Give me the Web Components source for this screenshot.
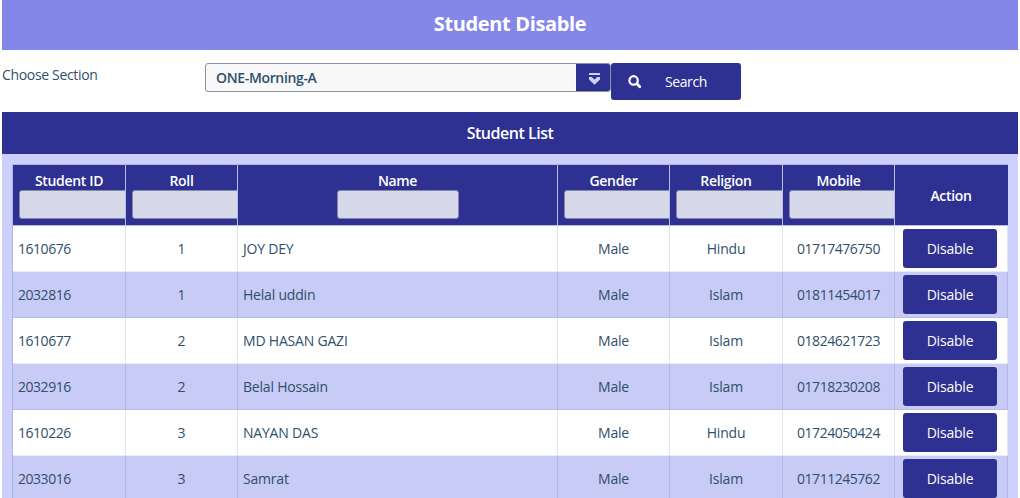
<!DOCTYPE html>
<html lang="en">
<head>
<meta charset="utf-8">
<title>Student Disable</title>
<style>
body{margin:0;height:498px;overflow:hidden;background:#fff;font:14px/20px "Open Sans",sans-serif;color:#2f4f6b;--navy:#2e3192}
</style>
</head>
<body>
<student-page></student-page>
<script>
const define = (name, html, setup) => customElements.define(name, class extends HTMLElement {
  constructor() {
    super();
    this.attachShadow({mode: 'open'});
  }
  connectedCallback() {
    if (this.shadowRoot.childNodes.length) return;
    const t = document.createElement('template');
    t.innerHTML = html;
    this.shadowRoot.append(t.content.cloneNode(true));
    if (setup) setup.call(this, this.shadowRoot);
  }
});

define('page-title', `<style>
:host{display:block;height:50px;box-sizing:border-box;padding-top:9px;background:#8587e8;color:#fff;font-size:20px;line-height:30px;font-weight:700;text-align:center;letter-spacing:-.37px}
</style><slot></slot>`);

define('section-select', `<style>
:host{display:flex;box-sizing:border-box;width:406px;height:29px;border:1px solid #8a929b;border-radius:3px;background:#f8f8f8;overflow:hidden;font-weight:600;line-height:27px}
.value{flex:1;padding-left:10px;letter-spacing:-.35px}
.arrow{width:34px;background:var(--navy);display:flex;justify-content:center}
svg{margin-top:9px;margin-left:3px;width:13px;height:13px}
</style><div class="value"><slot></slot></div><div class="arrow"><svg viewBox="0 0 13 13"><path d="M1.8 0h9.4a.9.9 0 0 1 .9.9v1.2H.9V.9a.9.9 0 0 1 .9-.9z" fill="#cdd3fb"/><path d="M1 4h2.6l2.9 2.6L9.4 4H12v2.6l-5.5 5.2L1 6.6z" fill="#cdd3fb"/></svg></div>`);

define('action-button', `<style>
:host{display:flex;align-items:center;justify-content:center;box-sizing:border-box;border-radius:3px;background:var(--navy);color:#fff}
</style><slot name="icon"></slot><span><slot></slot></span>`);

define('section-form', `<style>
:host{display:flex;height:62px;box-sizing:border-box;padding-top:13px}
label{width:203px;padding-top:2px;letter-spacing:-.33px}
action-button{width:130px;height:37px;letter-spacing:-.4px;justify-content:flex-start;padding-left:17px}
svg{width:14px;height:14px;margin-right:23px}
</style><label>Choose Section</label><section-select>ONE-Morning-A</section-select>
<action-button><svg slot="icon" viewBox="0 0 14 14" fill="none" stroke="#fff"><circle cx="5.6" cy="5.4" r="4.2" stroke-width="2.2"/><path d="m8.9 8.8 2.9 2.9" stroke-width="2.8" stroke-linecap="round"/></svg>Search</action-button>`);

define('head-cell', `<style>
:host{display:block;box-sizing:border-box;height:60px;border-right:1px solid #b9bee9;background:var(--navy);color:#fff;font-weight:600;letter-spacing:-.33px;text-align:center;overflow:hidden;padding-top:6px}
:host([plain]){padding-top:21px;border-right-color:var(--navy)}
:host([plain]) .filter{display:none}
.filter{box-sizing:border-box;width:122px;height:29px;margin:-1px 0 0 6px;border:1px solid #8588a6;border-radius:3px;background:#d6d7e8}
:host([wide]) .filter{margin-left:99px}
</style><div><slot></slot></div><div class="filter"></div>`);

define('data-cell', `<style>
:host{display:block;box-sizing:border-box;height:46px;padding:13px 5px 0;text-align:center;letter-spacing:-.2px;border-right:1px solid rgba(80,90,170,.15);border-bottom:1px solid rgba(80,90,170,.13)}
:host([left]){text-align:left}
:host([digits]){letter-spacing:-.47px}
:host([button]){padding:3px 10px 0 8px}
::slotted(action-button){height:39px}
</style><slot></slot>`);

define('student-row', `<style>
:host{display:grid;grid-template-columns:subgrid;grid-column:1/-1;background:#fff}
:host([shaded]){background:#c7cbf5}
</style><slot></slot>`);

define('student-table', `<style>
:host{display:grid;grid-template-columns:113px 112px 320px 112px 113px 112px 113px;border:1px solid #aeb3e8;border-right:0}
.head{display:grid;grid-template-columns:subgrid;grid-column:1/-1;border-bottom:1px solid #b9bee9}
</style><div class="head"><head-cell>Student ID</head-cell><head-cell>Roll</head-cell><head-cell wide>Name</head-cell><head-cell>Gender</head-cell><head-cell>Religion</head-cell><head-cell>Mobile</head-cell><head-cell plain>Action</head-cell></div>`, function(root) {
  const rows = [
    ['1610676','1','JOY DEY','Hindu','01717476750'],
    ['2032816','1','Helal uddin','Islam','01811454017'],
    ['1610677','2','MD HASAN GAZI','Islam','01824621723'],
    ['2032916','2','Belal Hossain','Islam','01718230208'],
    ['1610226','3','NAYAN DAS','Hindu','01724050424'],
    ['2033016','3','Samrat','Islam','01711245762']
  ];
  rows.forEach(([id, roll, name, religion, mobile], i) => {
    const row = document.createElement('student-row');
    row.toggleAttribute('shaded', i % 2 === 1);
    row.innerHTML = `<data-cell left digits>${id}</data-cell><data-cell>${roll}</data-cell><data-cell left>${name}</data-cell><data-cell>Male</data-cell><data-cell>${religion}</data-cell><data-cell digits>${mobile}</data-cell><data-cell button><action-button>Disable</action-button></data-cell>`;
    root.append(row);
  });
});

define('list-panel', `<style>
:host{display:block;background:#cdd0fc}
header{height:42px;box-sizing:border-box;padding-top:9px;background:var(--navy);color:#fff;font-size:16px;line-height:24px;font-weight:600;text-align:center;letter-spacing:-.48px}
.body{padding:10px 10px 0}
</style><header><slot name="title"></slot></header><div class="body"><slot></slot></div>`);

define('student-page', `<style>
:host{display:block;padding:0 2px}
</style><page-title>Student Disable</page-title><section-form></section-form>
<list-panel><span slot="title">Student List</span><student-table></student-table></list-panel>`);
</script>
</body>
</html>
